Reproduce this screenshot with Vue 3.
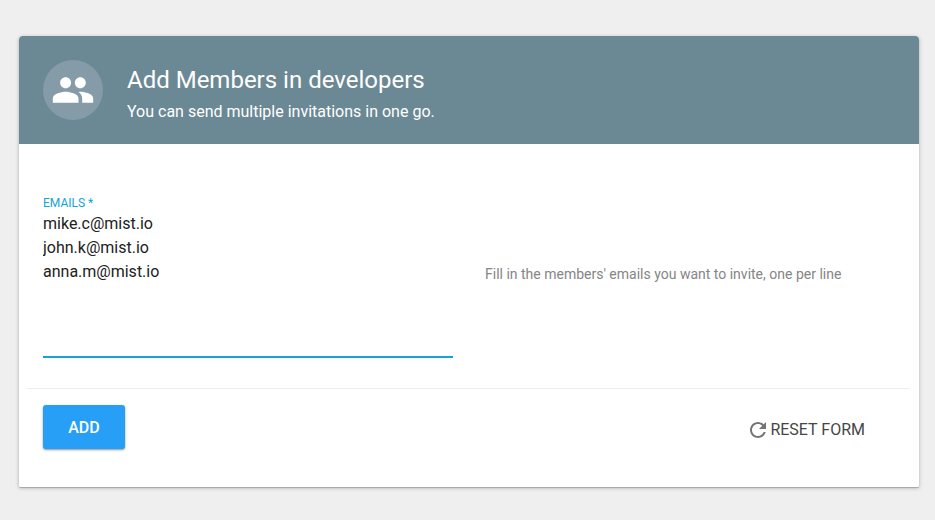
<script setup>
import { ref } from 'vue'

const initial = 'mike.c@mist.io\njohn.k@mist.io\nanna.m@mist.io'
const emails = ref(initial)
const reset = () => {
  emails.value = ''
}
</script>

<template>
  <main class="page">
    <form class="card" @submit.prevent>
      <header class="head">
        <div class="badge">
          <svg class="people" viewBox="0 0 24 24">
            <path d="M16 11c1.66 0 2.99-1.34 2.99-3S17.66 5 16 5c-1.66 0-3 1.34-3 3s1.34 3 3 3zm-8 0c1.66 0 2.99-1.34 2.99-3S9.66 5 8 5C6.34 5 5 6.34 5 8s1.34 3 3 3zm0 2c-2.33 0-7 1.17-7 3.5V19h14v-2.500c0-2.330-4.670-3.500-7-3.500zm8 0c-.29 0-.62.02-.97.05 1.160.84 1.970 1.970 1.970 3.450V19h6v-2.500c0-2.330-4.670-3.500-7-3.500z" />
          </svg>
        </div>
        <div class="titles">
          <h1 class="title">Add Members in developers</h1>
          <p class="subtitle">You can send multiple invitations in one go.</p>
        </div>
      </header>
      <section class="fields">
        <div class="field">
          <label class="label" for="emails">EMAILS *</label>
          <textarea id="emails" v-model="emails" class="input" spellcheck="false"></textarea>
        </div>
        <p class="help">Fill in the members' emails you want to invite, one per line</p>
      </section>
      <footer class="actions">
        <button class="add" type="submit">ADD</button>
        <button class="reset" type="button" @click="reset">
          <svg class="refresh" viewBox="0 0 24 24">
            <path d="M17.65 6.35C16.2 4.9 14.21 4 12 4c-4.42 0-7.99 3.58-7.99 8s3.57 8 7.99 8c3.73 0 6.84-2.55 7.73-6h-2.08c-.82 2.33-3.04 4-5.65 4-3.31 0-6-2.69-6-6s2.690-6 6-6c1.660 0 3.140.69 4.220 1.780L13 11h7V4l-2.350 2.350z" />
          </svg>
          <span class="reset-text">RESET FORM</span>
        </button>
      </footer>
    </form>
  </main>
</template>

<style>
body {
  background: #efefef;
}
</style>

<style scoped>
.page {
  box-sizing: border-box;
  height: 520px;
  padding: 36px 16px 0 19px;
  font-family: Roboto, "Liberation Sans", sans-serif;
}
.card {
  display: flex;
  flex-direction: column;
  height: 451px;
  background: #fff;
  border-radius: 4px 4px 1px 1px;
  box-shadow: 0 1px 4px rgba(0, 0, 0, 0.24), 0 1px 1px rgba(0, 0, 0, 0.2);
}
.head {
  box-sizing: border-box;
  display: flex;
  height: 108px;
  padding: 24px;
  gap: 24px;
  color: #fff;
  background: #6b8895;
  border-radius: 4px 4px 0 0;
}
.badge {
  display: flex;
  align-items: center;
  justify-content: center;
  width: 60px;
  height: 60px;
  border-radius: 50%;
  background: #859ca8;
}
.people {
  width: 44px;
  height: 44px;
  fill: #fff;
}
.title {
  margin: 4px 0 0;
  font-size: 24px;
  font-weight: 400;
  line-height: 32px;
}
.subtitle {
  margin: 4px 0 0;
  font-size: 16px;
  line-height: 24px;
}
.fields {
  box-sizing: border-box;
  display: flex;
  height: 245px;
  margin: 0 9px 0 8px;
  padding: 49px 16px 0;
  gap: 32px;
  border-bottom: 1px solid #ededed;
}
.field {
  display: flex;
  flex-direction: column;
  width: 410px;
}
.label {
  height: 19px;
  color: #11a5d3;
  font-size: 12px;
  line-height: 20px;
}
.input {
  box-sizing: border-box;
  height: 146px;
  padding: 0;
  border: 0;
  border-bottom: 2px solid #11a5d3;
  outline: 0;
  resize: none;
  overflow: hidden;
  color: #212121;
  background: transparent;
  font: 400 16px/24px Roboto, "Liberation Sans", sans-serif;
}
.help {
  margin: 71px 0 0;
  color: #858585;
  font-size: 14px;
  line-height: 20px;
}
.actions {
  display: flex;
  align-items: flex-start;
  justify-content: space-between;
  padding: 16px 54px 0 24px;
}
button {
  border: 0;
  font-family: inherit;
  font-size: 16px;
}
.add {
  width: 82px;
  height: 44px;
  padding: 0;
  border-radius: 3px;
  color: #fff;
  background: #279ff6;
  box-shadow: 0 1px 3px rgba(0, 0, 0, 0.3), 0 1px 1px rgba(0, 0, 0, 0.16);
  font-weight: 500;
}
.reset {
  display: flex;
  align-items: center;
  margin-top: 13px;
  padding: 0;
  color: #464646;
  background: none;
}
.reset-text {
  padding-bottom: 2px;
}
.refresh {
  width: 24px;
  height: 24px;
  fill: #757575;
}
</style>
